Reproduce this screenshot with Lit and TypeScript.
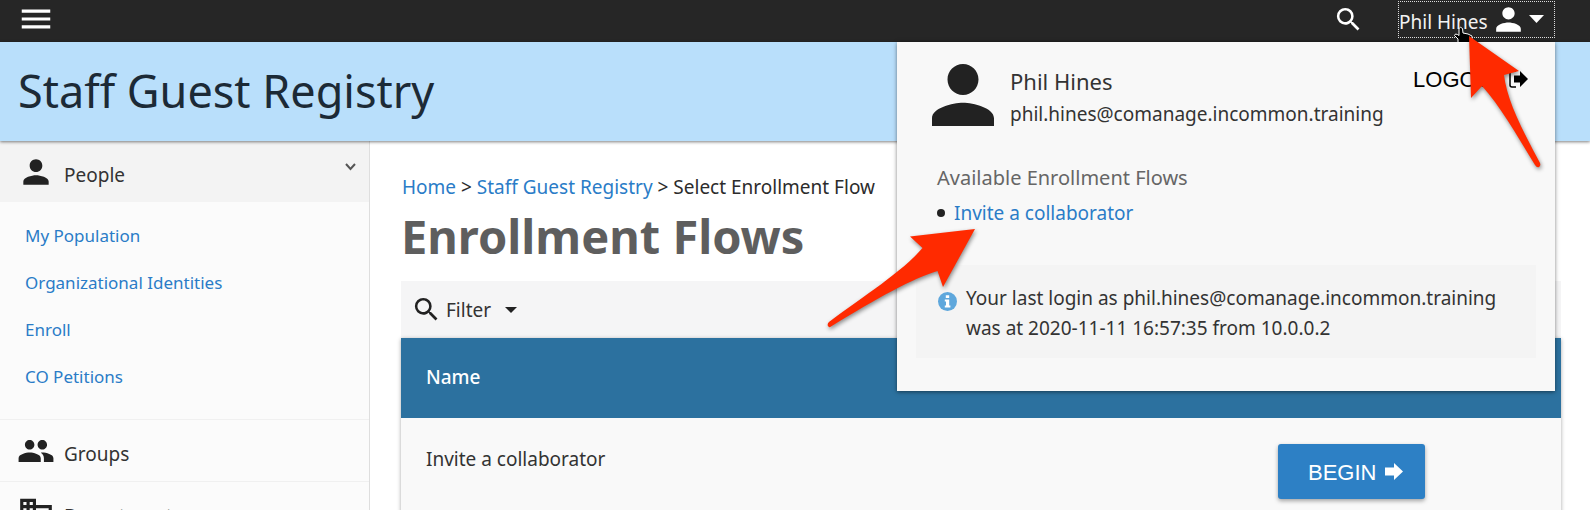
import { LitElement, html, css, svg } from "lit";
import { customElement, state } from "lit/decorators.js";

const personPath = svg`<path d="M12 12c2.21 0 4-1.79 4-4s-1.79-4-4-4-4 1.79-4 4 1.79 4 4 4zm0 2c-2.67 0-8 1.34-8 4v2h16v-2c0-2.66-5.33-4-8-4z"/>`;
const groupPath = svg`<path d="M16 11c1.66 0 2.99-1.34 2.99-3S17.66 5 16 5s-3 1.34-3 3 1.34 3 3 3zm-8 0c1.66 0 2.99-1.34 2.99-3S9.66 5 8 5 5 6.34 5 8s1.34 3 3 3zm0 2c-2.33 0-7 1.17-7 3.5V19h14v-2.5c0-2.33-4.67-3.5-7-3.5zm8 0c-.29 0-.62.02-.97.05 1.16.84 1.97 1.97 1.97 3.45V19h6v-2.5c0-2.33-4.67-3.5-7-3.5z"/>`;
const businessPath = svg`<path d="M12 7V3H2v18h20V7H12zM6 19H4v-2h2v2zm0-4H4v-2h2v2zm0-4H4V9h2v2zm0-4H4V5h2v2zm4 12H8v-2h2v2zm0-4H8v-2h2v2zm0-4H8V9h2v2zm0-4H8V5h2v2zm10 12h-8v-2h2v-2h-2v-2h2v-2h-2V9h8v10zm-2-8h-2v2h2v-2zm0 4h-2v2h2v-2z"/>`;
const searchPath = svg`<path d="M15.5 14h-.79l-.28-.27A6.471 6.471 0 0 0 16 9.5 6.5 6.5 0 1 0 9.5 16c1.61 0 3.09-.59 4.23-1.57l.27.28v.79l5 4.99L20.49 19l-4.99-5zm-6 0C7.01 14 5 11.99 5 9.5S7.01 5 9.5 5 14 7.01 14 9.5 11.99 14 9.5 14z"/>`;
const menuPath = svg`<path d="M3 18h18v-2H3v2zm0-5h18v-2H3v2zm0-7v2h18V6H3z"/>`;

@customElement("app-root")
export class AppRoot extends LitElement {
  @state() private userMenuOpen = true;

  static styles = css`
    :host {
      display: block;
      height: 100vh;
      overflow: hidden;
      background: #fff;
      color: #333;
      font-family: "Noto Sans", sans-serif;
      font-size: 19px;
      line-height: 28px;
    }
    * { box-sizing: border-box; }
    a { color: #2a7cc7; text-decoration: none; }
    button { font: inherit; color: inherit; background: none; border: 0; padding: 0; cursor: pointer; }
    svg { display: block; fill: currentColor; flex: none; }
    ul { list-style: none; margin: 0; padding: 0; }
    .page { position: relative; display: flex; flex-direction: column; min-height: 100%; }

    .topbar {
      display: flex;
      align-items: center;
      height: 42px;
      padding: 0 35px 4px 17px;
      background: #262626;
      color: #fff;
    }
    .spacer { flex: 1; }
    .search { margin-right: 34px; }
    .user {
      display: flex;
      align-items: center;
      width: 157px;
      height: 37px;
      border: 1px dotted #ddd;
    }
    .user-name { padding-top: 6px; color: #f2f2f2; }
    .user-icon { margin-left: 2px; }
    .user-caret { margin-left: 2px; }

    .banner {
      padding: 19px 18px 20px;
      background: #b9dffb;
      box-shadow: 0 1px 3px rgba(0, 0, 0, 0.5);
      color: #1c2a36;
      font-size: 45px;
      line-height: 60px;
      z-index: 1;
    }

    .body { display: flex; flex: 1; align-items: stretch; }
    .sidebar { width: 370px; flex: none; background: #fbfbfb; border-right: 1px solid #dedede; }
    .section {
      display: flex;
      align-items: center;
      gap: 9px;
      width: 100%;
      height: 61px;
      padding: 0 13px 0 17px;
      text-align: left;
      color: #222;
    }
    .open { background: #f3f3f3; }
    .section-name { flex: 1; padding-top: 6px; color: #333; }
    .chevron { margin-bottom: 10px; color: #555; }
    .submenu { padding: 10px 25px 19px; font-size: 17px; line-height: 47px; }
    .ruled { border-top: 1px solid #f0f0f0; }

    .main { flex: 1; min-width: 0; padding: 32px 29px 0 31px; }
    .crumbs { padding-left: 1px; color: #2c2c2c; }
    h1 { margin: 4px 0 13px; color: #5e5e5e; font-size: 47px; line-height: 63px; font-weight: 700; }
    .filter {
      display: flex;
      align-items: center;
      gap: 4px;
      width: 100%;
      height: 57px;
      padding: 0 10px;
      background: #f5f5f6;
    }
    .filter-icon { color: #222; }
    .filter-caret { margin-left: 10px; color: #222; }
    table {
      width: 100%;
      border-collapse: collapse;
      background: #f9f9f9;
      box-shadow: 0 1px 4px rgba(0, 0, 0, 0.35);
    }
    th { height: 80px; padding: 0 25px 2px; background: #2c719f; color: #fff; font-weight: 500; text-align: left; }
    td { padding: 26px 25px; line-height: 30px; vertical-align: top; }
    .actions { width: 308px; }
    .begin {
      display: flex;
      align-items: center;
      gap: 9px;
      height: 55px;
      padding: 0 22px 0 30px;
      border-radius: 3px;
      background: #2d80c5;
      box-shadow: 0 2px 4px rgba(0, 0, 0, 0.35);
      color: #fff;
      font-family: "Liberation Sans", sans-serif;
      font-size: 22px;
    }
    .label { padding-top: 2px; }

    .panel {
      position: absolute;
      top: 42px;
      right: 35px;
      z-index: 2;
      width: 658px;
      max-width: 100%;
      padding: 22px 19px 33px;
      background: #f8f8f8;
      box-shadow: 0 1px 4px rgba(0, 0, 0, 0.5);
    }
    .profile { display: flex; gap: 16px; height: 64px; padding: 0 8px 0 16px; color: #222; }
    .identity { flex: 1; padding-top: 1px; line-height: 33px; color: #333; }
    .identity-name { font-size: 22px; }
    .logout {
      display: flex;
      align-items: center;
      align-self: flex-start;
      gap: 3px;
      color: #000;
      font-family: "Liberation Sans", sans-serif;
      font-size: 22px;
    }
    .flows { padding: 32px 21px 35px; }
    h2 { margin: 0; color: #666; font-size: 20px; line-height: 36px; font-weight: 400; }
    .flow { display: flex; align-items: center; gap: 9px; line-height: 34px; color: #222; }
    .dot { width: 8px; height: 8px; border-radius: 50%; background: currentColor; }
    .notice {
      display: flex;
      gap: 9px;
      padding: 18px 22px 15px;
      background: #f4f4f4;
      line-height: 30px;
    }
    .notice p { margin: 0; }
    .notice-icon { margin-top: 9px; color: #5ea7dc; }
    .pointers { position: absolute; top: 0; left: 0; overflow: visible; pointer-events: none; }
    .arrow { fill: #ff2a00; filter: drop-shadow(1px 2px 2px rgba(0, 0, 0, 0.45)); }
  `;

  private icon(path: unknown, size: number, cls = "") {
    return html`<svg class=${cls} width=${size} height=${size} viewBox="0 0 24 24" aria-hidden="true">${path}</svg>`;
  }

  private userPanel() {
    return html`
      <section class="panel" aria-label="User menu">
        <div class="profile">
          <svg width="62" height="62" viewBox="4 4 16 16" aria-hidden="true">${personPath}</svg>
          <div class="identity">
            <div class="identity-name">Phil Hines</div>
            <div>phil.hines@comanage.incommon.training</div>
          </div>
          <button class="logout" type="button">
            <span class="label">LOGOUT</span>
            <svg width="19" height="18" viewBox="0 0 19 18" aria-hidden="true">
              <path d="M7 1H3Q1 1 1 3v12q0 2 2 2h4" fill="none" stroke="currentColor" stroke-width="1.500" />
              <path d="M5 5.500h6V1l8 8-8 8v-4.500H5z" />
            </svg>
          </button>
        </div>
        <div class="flows">
          <h2>Available Enrollment Flows</h2>
          <ul>
            <li class="flow"><span class="dot"></span><a href="#invite">Invite a collaborator</a></li>
          </ul>
        </div>
        <div class="notice">
          <svg class="notice-icon" width="19" height="19" viewBox="0 0 19 19" aria-hidden="true">
            <circle cx="9.500" cy="9.500" r="9.500" />
            <path d="M7.800 3.200h3.400v2.800H7.800zM6.800 7.600h4.400v6h1.200v2H6.800v-2H8v-4H6.800z" fill="#fff" />
          </svg>
          <p>Your last login as phil.hines@comanage.incommon.training<br />was at 2020-11-11 16:57:35 from 10.0.0.2</p>
        </div>
        <svg class="pointers" width="658" height="349" viewBox="0 0 658 349" aria-hidden="true">
          <path
            d="M562-13.500Q563.500-16 565.500-13.500L566-9 571-8 575-6V-1L573 2V.500H561V-3L557.500-6.500Q558-9 560.500-7.500L562-6.500Z"
            fill="#000" stroke="#fff" stroke-width="1"
          />
          <path class="arrow" d="M572-6L622 29L607 33C610 57 622 82 643 121Q644 124 642 125Q640 126 638 123C622 97 604 65 585 44L574 56Z" />
          <path class="arrow" d="M78 187L46 245L40.500 229C17 236-20 256-66 284.500Q-68 286-69 284Q-70 282-68 280C-32 253 5 230 25.500 206L13 194.500Z" />
        </svg>
      </section>
    `;
  }

  render() {
    return html`
      <div class="page">
        <header class="topbar">
          <button type="button" aria-label="Menu">${this.icon(menuPath, 38)}</button>
          <span class="spacer"></span>
          <button class="search" type="button" aria-label="Search">${this.icon(searchPath, 31)}</button>
          <button
            class="user"
            type="button"
            aria-expanded=${this.userMenuOpen ? "true" : "false"}
            @click=${() => (this.userMenuOpen = !this.userMenuOpen)}
          >
            <span class="user-name">Phil Hines</span>
            ${this.icon(personPath, 37, "user-icon")}
            <svg class="user-caret" width="15" height="8" viewBox="0 0 15 8" aria-hidden="true"><path d="M0 0h15L7.500 8z" /></svg>
          </button>
        </header>
        <div class="banner">Staff Guest Registry</div>
        <div class="body">
          <nav class="sidebar" aria-label="Main">
            <button class="section open" type="button" aria-expanded="true">
              ${this.icon(personPath, 38)}
              <span class="section-name">People</span>
              <svg class="chevron" width="11" height="8" viewBox="0 0 11 8" aria-hidden="true">
                <path d="M1 1l4.500 5L10 1" fill="none" stroke="currentColor" stroke-width="2" />
              </svg>
            </button>
            <ul class="submenu">
              <li><a href="#population">My Population</a></li>
              <li><a href="#identities">Organizational Identities</a></li>
              <li><a href="#enroll">Enroll</a></li>
              <li><a href="#petitions">CO Petitions</a></li>
            </ul>
            <div class="ruled">
              <button class="section" type="button">${this.icon(groupPath, 38)}<span class="section-name">Groups</span></button>
            </div>
            <div class="ruled">
              <button class="section" type="button">${this.icon(businessPath, 38)}<span class="section-name">Departments</span></button>
            </div>
          </nav>
          <main class="main">
            <nav class="crumbs" aria-label="Breadcrumb">
              <a href="#home">Home</a> &gt; <a href="#registry">Staff Guest Registry</a> &gt; Select Enrollment Flow
            </nav>
            <h1>Enrollment Flows</h1>
            <button class="filter" type="button">
              ${this.icon(searchPath, 31, "filter-icon")}
              <span>Filter</span>
              <svg class="filter-caret" width="12" height="6" viewBox="0 0 12 6" aria-hidden="true"><path d="M0 0h12L6 6z" /></svg>
            </button>
            <table>
              <thead>
                <tr><th scope="col">Name</th><th scope="col" class="actions" aria-label="Actions"></th></tr>
              </thead>
              <tbody>
                <tr>
                  <td>Invite a collaborator</td>
                  <td class="actions">
                    <button class="begin" type="button">
                      <span class="label">BEGIN</span>
                      <svg width="18" height="18" viewBox="0 0 18 18" aria-hidden="true"><path d="M0 4.500h9V0l9 8.500-9 8.500v-4.500H0z" /></svg>
                    </button>
                  </td>
                </tr>
              </tbody>
            </table>
          </main>
        </div>
        ${this.userMenuOpen ? this.userPanel() : null}
      </div>
    `;
  }
}
